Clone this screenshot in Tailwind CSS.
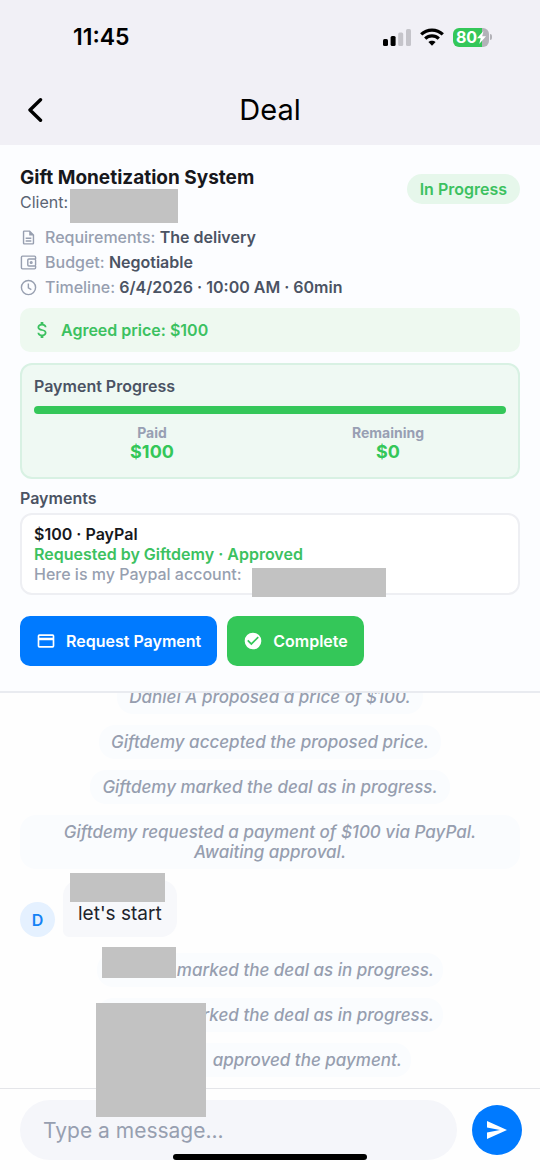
<!DOCTYPE html>
<html lang="en">
<head>
<meta charset="utf-8">
<meta name="viewport" content="width=device-width, initial-scale=1">
<title>Deal</title>
<script src="https://cdn.jsdelivr.net/npm/@tailwindcss/browser@4"></script>
</head>
<body class="flex h-screen flex-col overflow-hidden bg-[#fefefe] font-['Inter','Liberation_Sans',sans-serif] text-[#17181c]">

<header class="shrink-0 bg-[#f1f0f6] text-black">
  <div class="flex h-[74px] items-center justify-between pr-[48px] pl-[73px]">
    <span class="text-[23px] leading-7 font-semibold">11:45</span>
    <div class="flex items-center gap-[9px]">
      <svg class="h-[18px] w-[28px]" viewBox="0 0 28 18" aria-hidden="true">
        <rect x="0" y="11" width="5" height="7" rx="1.5"/><rect x="7.600" y="8" width="5" height="10" rx="1.500"/>
        <rect x="15.200" y="4.500" width="5" height="13.500" rx="1.500" fill="#c5c4ca"/><rect x="23" y="1" width="5" height="17" rx="1.500" fill="#c5c4ca"/>
      </svg>
      <svg class="h-[18px] w-6" viewBox="0 0 24 18" fill="none" stroke="#000" stroke-width="3.200" aria-hidden="true">
        <path d="M1.200 6.400C7.200.6 16.800.6 22.800 6.400"/><path d="M5.200 10.600c3.900-3.700 9.700-3.700 13.600 0"/>
        <path d="M12 17.800l-3.600-3.700c2-1.800 5.200-1.800 7.200 0z" fill="#000" stroke="none"/>
      </svg>
      <div class="flex items-center gap-px">
        <div class="flex h-[19px] w-9 items-center justify-center rounded-md bg-linear-to-r from-[#34c759] from-80% to-[#b3b2b8] to-80% text-base leading-none font-bold text-white">80<svg class="h-[13px] w-[9px]" viewBox="0 0 9 13" fill="#fff" aria-hidden="true"><path d="M6.500 0L0 7.300h3.700L2.200 13 9 5.300H5.200z"/></svg></div>
        <span class="h-[6px] w-[2px] rounded-r-sm bg-[#b3b2b8]"></span>
      </div>
    </div>
  </div>
  <div class="grid h-[71px] grid-cols-[70px_1fr_70px] items-center">
    <button type="button" aria-label="Back" class="flex h-11 items-center pl-[28px]">
      <svg class="h-6 w-[15px]" viewBox="0 0 15 24" fill="none" stroke="#000" stroke-width="3.400" stroke-linecap="round" stroke-linejoin="round" aria-hidden="true"><path d="M12.500 1.800L2 12l10.500 10.200"/></svg>
    </button>
    <h1 class="text-center text-[29px] leading-9">Deal</h1>
  </div>
</header>

<section class="shrink-0 border-b-2 border-[#e9ebf0] bg-[#fcfdff] px-5 pt-[21px] pb-[25px] text-base">
  <div class="flex items-start justify-between">
    <div>
      <h2 class="text-[19px] leading-6 font-bold">Gift Monetization System</h2>
      <p class="relative flex w-fit leading-6 text-[#5b6474]">Client:<span class="absolute -top-px left-full ml-[2px] h-[34px] w-[108px] bg-[#c2c2c2]"></span></p>
    </div>
    <span class="mt-2 rounded-full bg-[#e6f7eb] px-[13px] py-1 leading-[22px] font-semibold text-[#3cc160]">In Progress</span>
  </div>

  <ul class="mt-[11px] leading-[25px] font-medium text-[#979fb0]">
    <li class="flex items-center gap-2"><svg class="size-[17px]" viewBox="0 0 24 24" fill="currentColor" aria-hidden="true"><path d="M6 2a2 2 0 0 0-2 2v16a2 2 0 0 0 2 2h12a2 2 0 0 0 2-2V8l-6-6H6m0 2h7v5h5v11H6V4m2 8v2h8v-2H8m0 4v2h8v-2H8z"/></svg><span>Requirements: <b class="font-semibold text-[#4b5363]">The delivery</b></span></li>
    <li class="flex items-center gap-2"><svg class="size-[17px]" viewBox="0 0 24 24" fill="none" stroke="currentColor" stroke-width="2" stroke-linejoin="round" aria-hidden="true"><path d="M22 7V4.500A1.500 1.500 0 0 0 20.500 3h-17A1.500 1.500 0 0 0 2 4.500v15A1.500 1.500 0 0 0 3.500 21h17a1.500 1.500 0 0 0 1.500-1.500V17"/><rect x="11" y="7" width="11" height="10" rx="1.500"/><circle cx="15.800" cy="12" r="1.200"/></svg><span>Budget: <b class="font-semibold text-[#4b5363]">Negotiable</b></span></li>
    <li class="flex items-center gap-2"><svg class="size-[17px]" viewBox="0 0 24 24" fill="none" stroke="currentColor" stroke-width="2" aria-hidden="true"><circle cx="12" cy="12" r="10"/><path d="M11.800 6.500v6l4.200 2.500"/></svg><span>Timeline: <b class="font-semibold text-[#4b5363]">6/4/2026 · 10:00 AM · 60min</b></span></li>
  </ul>

  <div class="mt-2 flex h-11 items-center gap-[10px] rounded-[10px] bg-[#eef9f0] px-[13px] font-semibold text-[#3cc160]">
    <svg class="h-[18px] w-[18px]" viewBox="3 2 18 20" fill="currentColor" aria-hidden="true"><path d="M7 15h2c0 1.080 1.370 2 3 2s3-.92 3-2c0-1.100-1.040-1.500-3.240-2.030C9.640 12.440 7 11.780 7 9c0-1.790 1.470-3.310 3.500-3.820V3h3v2.180C15.530 5.690 17 7.210 17 9h-2c0-1.080-1.370-2-3-2s-3 .92-3 2c0 1.100 1.040 1.500 3.240 2.030C14.360 11.560 17 12.220 17 15c0 1.790-1.470 3.310-3.500 3.820V21h-3v-2.180C8.470 18.310 7 16.790 7 15z"/></svg>
    Agreed price: $100
  </div>

  <div class="mt-[11px] rounded-xl border-2 border-[#d8f1e3] bg-[#eff9f3] px-3 pt-[10px] pb-[15px]">
    <h3 class="leading-[22px] font-semibold text-[#4b5363]"><span id="pp">Payment Progress</span></h3>
    <div role="progressbar" aria-labelledby="pp" aria-valuemin="0" aria-valuemax="100" aria-valuenow="100" class="mt-[9px] h-2 rounded-full bg-[#34c759]"></div>
    <dl class="mt-[10px] grid grid-cols-2 text-center">
      <div><dt class="text-sm leading-[18px] font-bold text-[#989fb3]">Paid</dt><dd class="text-lg leading-5 font-bold text-[#34c759]">$100</dd></div>
      <div><dt class="text-sm leading-[18px] font-bold text-[#989fb3]">Remaining</dt><dd class="text-lg leading-5 font-bold text-[#34c759]">$0</dd></div>
    </dl>
  </div>

  <h3 class="mt-2 leading-[22px] font-semibold text-[#4b5363]">Payments</h3>
  <div class="mt-1 rounded-xl border-2 border-[#eeeff3] bg-white px-3 py-[9px] leading-5">
    <p class="font-semibold">$100 · PayPal</p>
    <p class="font-semibold text-[#3cc160]">Requested by Giftdemy · Approved</p>
    <p class="relative w-fit font-medium text-[#979fb0]">Here is my Paypal account:<span class="absolute top-1 left-full ml-[10px] h-[29px] w-[134px] bg-[#c2c2c2]"></span></p>
  </div>

  <div class="mt-[21px] flex gap-[10px] font-semibold text-white">
    <button type="button" class="flex h-[50px] items-center gap-[10px] rounded-[10px] bg-[#007aff] px-4">
      <svg class="size-5" viewBox="0 0 24 24" fill="currentColor" aria-hidden="true"><path d="M20 4H4a2 2 0 0 0-2 2v12a2 2 0 0 0 2 2h16a2 2 0 0 0 2-2V6a2 2 0 0 0-2-2m0 14H4v-7h16v7m0-10H4V6h16v2z"/></svg>Request Payment</button>
    <button type="button" class="flex h-[50px] items-center gap-[10px] rounded-[10px] bg-[#34c759] px-4">
      <svg class="size-5" viewBox="0 0 24 24" fill="currentColor" aria-hidden="true"><path d="M12 2a10 10 0 1 0 0 20 10 10 0 0 0 0-20m-2 15-5-5 1.410-1.410L10 14.170l7.590-7.590L19 8l-9 9z"/></svg>Complete</button>
  </div>
</section>

<main class="flex min-h-0 flex-1 flex-col items-center justify-end gap-[11px] overflow-hidden px-5 pb-[11px] text-center text-[17px] leading-5 font-medium text-[#969eaf] italic">
  <p class="shrink-0 rounded-2xl bg-[#fafcfe] px-3 py-[7px]">Daniel A proposed a price of $100.</p>
  <p class="shrink-0 rounded-2xl bg-[#fafcfe] px-3 py-[7px]">Giftdemy accepted the proposed price.</p>
  <p class="shrink-0 rounded-2xl bg-[#fafcfe] px-3 py-[7px]">Giftdemy marked the deal as in progress.</p>
  <p class="w-full shrink-0 rounded-2xl bg-[#fafcfe] px-3 py-[7px]">Giftdemy requested a payment of $100 via PayPal.<br>Awaiting approval.</p>
  <div class="mb-[5px] flex shrink-0 items-end gap-2 self-start not-italic">
    <span class="flex size-[35px] items-center justify-center rounded-full bg-[#e5f1ff] text-base font-semibold text-[#1482f5]">D</span>
    <div class="relative rounded-2xl rounded-bl-md bg-[#f7f8fb] px-[15px] pt-[22px] pb-[11px] text-[19px] leading-6 font-normal text-[#20242c]">let's start<span class="absolute -top-[7px] left-[7px] h-[29px] w-[95px] bg-[#c2c2c2]"></span></div>
  </div>
  <p class="relative flex w-[346px] shrink-0 justify-end rounded-2xl bg-[#fafcfe] px-[9px] py-[7px]"><span class="absolute -top-[6px] left-[5px] h-[31px] w-[74px] bg-[#c2c2c2]"></span>marked the deal as in progress.</p>
  <p class="flex w-[346px] shrink-0 justify-end rounded-2xl bg-[#fafcfe] px-[9px] py-[7px]">marked the deal as in progress.</p>
  <p class="flex w-[282px] shrink-0 justify-end rounded-2xl bg-[#fafcfe] px-[9px] py-[7px]">approved the payment.</p>
</main>

<form class="relative flex shrink-0 items-start gap-[15px] border-t border-[#e4e5e9] bg-[#fefefe] pt-[11px] pr-[18px] pb-[10px] pl-5" onsubmit="return false">
  <input type="text" aria-label="Message" placeholder="Type a message..." class="h-[60px] min-w-0 flex-1 rounded-full bg-[#f5f6fa] px-[23px] text-[21px] text-[#20242c] outline-none placeholder:text-[#979fb0]">
  <button type="submit" aria-label="Send" class="mt-[5px] flex size-[50px] items-center justify-center rounded-full bg-[#007aff]">
    <svg class="h-[18px] w-5" viewBox="0 0 20 18" fill="#fff" aria-hidden="true"><path d="M0 0l20 9L0 18v-6.500l13-2.500L0 6.500z"/></svg>
  </button>
  <span class="absolute bottom-[53px] left-24 h-[114px] w-[110px] bg-[#c2c2c2]"></span>
  <span class="absolute bottom-[10px] left-1/2 h-[6px] w-[194px] -translate-x-1/2 rounded-full bg-black"></span>
</form>
</body>
</html>
